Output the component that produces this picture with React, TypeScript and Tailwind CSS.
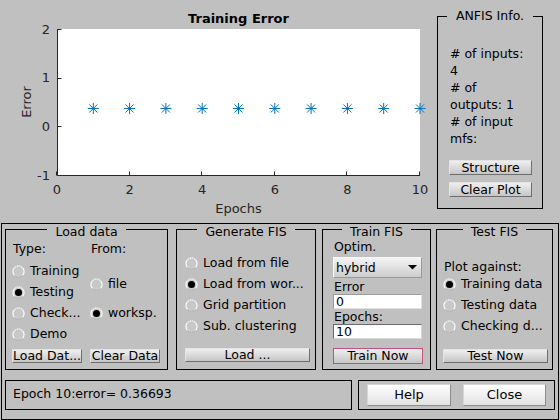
import React from "react";

const Radio = ({ on }: { on?: boolean }) => (
  <svg width="13" height="13" viewBox="0 0 13 13" className="shrink-0">
    <circle cx="6.5" cy="6.5" r="5.6" fill="#c8c8c8" stroke="#ffffff" strokeWidth="1.1" />
    <path d="M2.5 10.5 A5.6 5.6 0 0 0 10.5 10.5" stroke="#8c8c8c" strokeWidth="0.9" fill="none" />
    <path d="M2.5 2.5 A5.6 5.6 0 0 1 10.5 2.5" stroke="#9a9a9a" strokeWidth="0.6" fill="none" strokeDasharray="1 1" />
    {on && <circle cx="6.5" cy="6.5" r="3.5" fill="#000" />}
  </svg>
);

const RadioRow = ({ on, label }: { on?: boolean; label: string }) => (
  <div className="flex items-center h-[21px] gap-[5px] whitespace-nowrap">
    <Radio on={on} />
    <span>{label}</span>
  </div>
);

const btnBase =
  "h-[14px] flex items-center justify-center leading-[14px] whitespace-nowrap overflow-hidden bg-linear-to-b from-[#efefef] to-[#c6c6c6] text-black border";
const btn = btnBase + " border-t-[#e4e4e4] border-l-[#e4e4e4] border-r-[#6f6f6f] border-b-[#6f6f6f]";

const Panel = ({
  title,
  className,
  children,
}: {
  title: string;
  className: string;
  children: React.ReactNode;
}) => (
  <div className={"relative border border-black shrink-0 " + className}>
    <div className="absolute left-0 right-0 top-[-5px] flex justify-center">
      <span className="bg-[#c0c0c0] px-[8px] leading-[14px]">{title}</span>
    </div>
    {children}
  </div>
);

export default function App() {
  const yTicks = [2, 1, 0, -1];
  const yOf = (v: number) => 29 + (2 - v) * (146 / 3);
  const xOf = (v: number) => 57 + v * 36.3;
  const xTicks = [0, 2, 4, 6, 8, 10];
  const pts = [1, 2, 3, 4, 5, 6, 7, 8, 9, 10];
  const my = yOf(0.36693);

  return (
    <div className="w-[560px] h-[420px] bg-[#c0c0c0] font-['DejaVu_Sans',sans-serif] text-[12.5px] text-black overflow-hidden">
      {/* top */}
      <div className="h-[223px] flex">
        <svg width="437" height="223" className="shrink-0">
          <text x="238.5" y="22.5" textAnchor="middle" fontWeight="bold" fontSize="13" fill="#000">
            Training Error
          </text>
          <rect x="57" y="29" width="363" height="146" fill="#fff" />
          <path d="M57.5 29 V175.5 H420" stroke="#262626" strokeWidth="1" fill="none" />
          {yTicks.map((v) => (
            <g key={v}>
              <line x1="57.5" x2="61.5" y1={Math.round(yOf(v)) + 0.5} y2={Math.round(yOf(v)) + 0.5} stroke="#262626" />
              <text x="50" y={yOf(v) + 4.6} textAnchor="end" fontSize="13" fill="#262626">
                {v}
              </text>
            </g>
          ))}
          {xTicks.map((v) => (
            <g key={v}>
              <line x1={Math.round(xOf(v)) - 0.5} x2={Math.round(xOf(v)) - 0.5} y1="175.5" y2="171.5" stroke="#262626" />
              <text x={xOf(v)} y="194" textAnchor="middle" fontSize="13" fill="#262626">
                {v}
              </text>
            </g>
          ))}
          {pts.map((p) => {
            const x = xOf(p);
            return (
              <g key={p} stroke="#0072bd" strokeWidth="1">
                <line x1={x} x2={x} y1={my - 5.5} y2={my + 5.5} />
                <line x1={x - 5.5} x2={x + 5.5} y1={my} y2={my} />
                <line x1={x - 4} x2={x + 4} y1={my - 4} y2={my + 4} />
                <line x1={x - 4} x2={x + 4} y1={my + 4} y2={my - 4} />
              </g>
            );
          })}
          <text x="238.5" y="212.5" textAnchor="middle" fontSize="13" fill="#262626">
            Epochs
          </text>
          <text
            x="0"
            y="0"
            textAnchor="middle"
            fontSize="13"
            fill="#262626"
            transform="translate(30.5 102) rotate(-90)"
          >
            Error
          </text>
        </svg>

        <div className="mt-[16px] w-[106px] h-[193px] relative border border-black shrink-0">
          <div className="absolute left-0 right-0 top-[-8px] flex justify-center">
            <span className="bg-[#c0c0c0] px-[9px] leading-[14px]">ANFIS Info.</span>
          </div>
          <div className="pt-[28px] pl-[12px] leading-[17px]">
            <div># of inputs:</div>
            <div>4</div>
            <div># of</div>
            <div>outputs: 1</div>
            <div># of input</div>
            <div>mfs:</div>
          </div>
          <div className="pl-[11px] mt-[13px] flex flex-col gap-[7px]">
            <div className={btn + " w-[83px] h-[15px]"}>Structure</div>
            <div className={btn + " w-[83px] h-[15px]"}>Clear Plot</div>
          </div>
        </div>
      </div>

      {/* bottom frame */}
      <div className="ml-[1px] w-[558px] h-[197px] border border-black">
        <div className="flex pl-[3px] pt-[5px]">
          {/* Load data */}
          <Panel title="Load data" className="w-[163px] h-[141px]">
            <div className="pl-[6px] pt-[12px]">
              <div className="flex">
                <div className="w-[78px] shrink-0">
                  <div className="leading-[14px] pl-[1px]">Type:</div>
                  <div className="mt-[5px]">
                    <RadioRow label="Training" />
                    <RadioRow label="Testing" on />
                    <RadioRow label="Check..." />
                    <RadioRow label="Demo" />
                  </div>
                </div>
                <div>
                  <div className="leading-[14px] pl-[1px]">From:</div>
                  <div className="mt-[18px]">
                    <RadioRow label="file" />
                  </div>
                  <div className="mt-[8px]">
                    <RadioRow label="worksp." on />
                  </div>
                </div>
              </div>
              <div className="flex gap-[8px] mt-[4px]">
                <div className={btn + " w-[70px] justify-start"}>Load Dat...</div>
                <div className={btn + " w-[70px]"}>Clear Data</div>
              </div>
            </div>
          </Panel>

          {/* Generate FIS */}
          <Panel title="Generate FIS" className="ml-[8px] w-[140px] h-[141px]">
            <div className="pl-[8px] pt-[23px]">
              <RadioRow label="Load from file" />
              <RadioRow label="Load from wor..." on />
              <RadioRow label="Grid partition" />
              <RadioRow label="Sub. clustering" />
              <div className={btn + " w-[125px] mt-[11px]"}>Load ...</div>
            </div>
          </Panel>

          {/* Train FIS */}
          <Panel title="Train FIS" className="ml-[6px] w-[109px] h-[141px]">
            <div className="pl-[10px] pt-[10px]">
              <div className="leading-[14px] pl-[1px]">Optim.</div>
              <div className="mt-[3px] w-[89px] h-[21px] flex items-center justify-between pl-[2px] pr-[4px] bg-linear-to-b from-[#f4f4f4] to-[#cdcdcd] border border-t-[#f8f8f8] border-l-[#f8f8f8] border-r-[#9a9a9a] border-b-[#9a9a9a]">
                <span className="leading-[14px]">hybrid</span>
                <svg width="9" height="5" viewBox="0 0 9 5">
                  <polygon points="0,0 9,0 4.5,4.5" fill="#000" />
                </svg>
              </div>
              <div className="leading-[14px] mt-[2px] pl-[1px]">Error</div>
              <div className="w-[89px] h-[15px] bg-white border border-t-[#9c9c9c] border-l-[#9c9c9c] border-r-[#e0e0e0] border-b-[#e0e0e0] pl-[2px] leading-[13px]">
                0
              </div>
              <div className="leading-[14px] mt-[1px] pl-[1px]">Epochs:</div>
              <div className="w-[89px] h-[15px] bg-white border border-t-[#6a6a6a] border-l-[#6a6a6a] border-r-[#d8d8d8] border-b-[#d8d8d8] pl-[2px] leading-[13px]">
                10
              </div>
              <div className={btnBase + " w-[90px] h-[16px] mt-[9px] border-[#c4507f]"}>Train Now</div>
            </div>
          </Panel>

          {/* Test FIS */}
          <Panel title="Test FIS" className="ml-[5px] w-[117px] h-[141px]">
            <div className="pl-[6px] pt-[30px]">
              <div className="leading-[14px] pl-[1px]">Plot against:</div>
              <RadioRow label="Training data" on />
              <RadioRow label="Testing data" />
              <RadioRow label="Checking d..." />
              <div className={btn + " w-[105px] mt-[12px]"}>Test Now</div>
            </div>
          </Panel>
        </div>

        <div className="flex pl-[3px] mt-[10px]">
          <div className="w-[347px] h-[30px] border border-black pl-[7px] pt-[6px] leading-[14px] shrink-0">
            Epoch 10:error= 0.36693
          </div>
          <div className="ml-[6px] w-[197px] h-[30px] border border-black flex items-start pl-[8px] pt-[3px] gap-[12px] shrink-0">
            <div className="w-[84px] h-[22px] flex items-center justify-center bg-linear-to-b from-[#ffffff] to-[#e2e2e2] border border-t-[#d6d6d6] border-l-[#d6d6d6] border-r-[#8c8c8c] border-b-[#8c8c8c] text-[13px]">
              Help
            </div>
            <div className="w-[83px] h-[22px] flex items-center justify-center bg-linear-to-b from-[#ffffff] to-[#e2e2e2] border border-t-[#d6d6d6] border-l-[#d6d6d6] border-r-[#8c8c8c] border-b-[#8c8c8c] text-[13px]">
              Close
            </div>
          </div>
        </div>
      </div>
    </div>
  );
}
